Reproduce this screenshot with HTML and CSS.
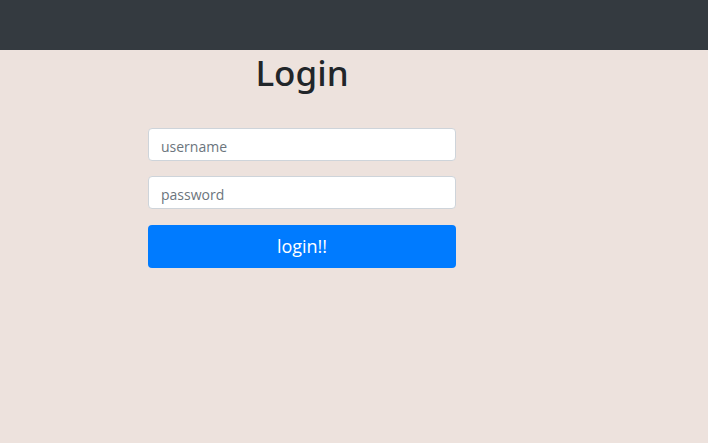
FILE: index.html
```
<!DOCTYPE html>
<html lang="en">
<head>
<meta charset="utf-8">
<title>Login</title>
<link rel="stylesheet" href="styles.css">
</head>
<body>
<nav class="navbar"></nav>
<main class="page">
  <section class="login">
    <h1 class="title">Login</h1>
    <form class="form">
      <input class="field" type="text" placeholder="username">
      <input class="field" type="password" placeholder="password">
      <button class="btn" type="button">login!!</button>
    </form>
  </section>
</main>
</body>
</html>
```
FILE: styles.css
```
html, body {
  margin: 0;
  padding: 0;
}
body {
  background: #ede2dd;
  font-family: "Open Sans", "Noto Sans", sans-serif;
  color: #212529;
  width: 708px;
  height: 443px;
  overflow: hidden;
}
.navbar {
  height: 50px;
  background: #343a40;
}
.page {
  padding-left: 148px;
}
.login {
  width: 308px;
  display: flex;
  flex-direction: column;
}
.title {
  margin: 1px 0 0 0;
  text-align: center;
  font-family: "Noto Sans", "Open Sans", sans-serif;
  font-size: 35px;
  font-weight: 500;
  line-height: 44px;
}
.form {
  margin-top: 33px;
  display: flex;
  flex-direction: column;
  gap: 15px;
}
.field {
  box-sizing: border-box;
  height: 33px;
  margin: 0;
  padding: 3px 12px 0;
  border: 1px solid #ced4da;
  border-radius: 4px;
  background: #fff;
  font-family: inherit;
  font-size: 14px;
  color: #495057;
  outline: none;
}
.field::placeholder {
  color: #6c757d;
}
.btn {
  margin-top: 1px;
  height: 43px;
  border: 0;
  border-radius: 4px;
  background: #007bff;
  color: #fff;
  font-family: inherit;
  font-size: 18px;
  padding: 0 0 2px;
}
```
